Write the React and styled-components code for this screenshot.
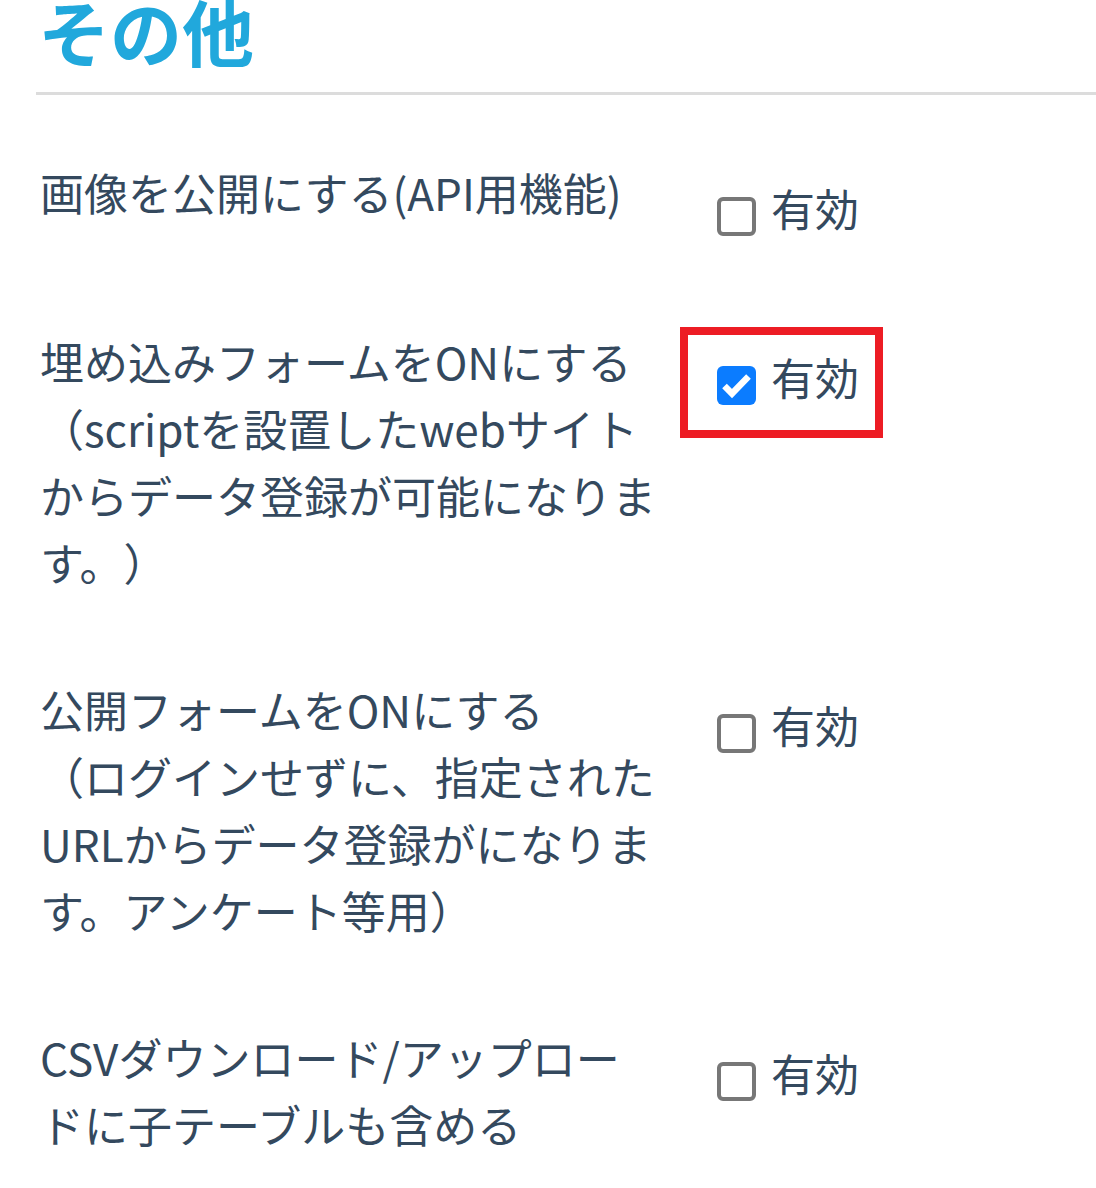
import React from "react";
import styled, { createGlobalStyle } from "styled-components";

const GlobalStyle = createGlobalStyle`
  html, body {
    margin: 0;
    padding: 0;
    background: #ffffff;
  }
  body {
    font-family: "Noto Sans CJK JP", "Noto Sans", sans-serif;
    color: #34495e;
    overflow: hidden;
  }
`;

const settings = [
  { id: "public-image", lead: "画像を公開にする(API用機能)", note: "", checked: false },
  {
    id: "embed-form",
    lead: "埋め込みフォームをONにする",
    note: "（scriptを設置したwebサイトからデータ登録が可能になります。）",
    checked: true,
    highlight: true,
  },
  {
    id: "public-form",
    lead: "公開フォームをONにする",
    note: "（ログインせずに、指定されたURLからデータ登録がになります。アンケート等用）",
    checked: false,
  },
  { id: "csv-child", lead: "CSVダウンロード/アップロードに子テーブルも含める", note: "", checked: false },
];

const CheckIcon = () => (
  <svg width="39" height="39" viewBox="0 0 39 39">
    <path d="M7.5 20 L15 27.5 L31.5 10.5" fill="none" stroke="#ffffff" strokeWidth="6.5" strokeLinejoin="miter" />
  </svg>
);

const Checkbox = ({ checked }) => (
  <S.Box $checked={checked}>{checked && <CheckIcon />}</S.Box>
);

const SettingRow = ({ item }) => (
  <S.Row>
    <S.Label>
      {item.lead}
      {item.note && (
        <>
          <br />
          {item.note}
        </>
      )}
    </S.Label>
    <S.Option>
      <Checkbox checked={item.checked} />
      <S.OptionText>有効</S.OptionText>
      {item.highlight && <S.Highlight />}
    </S.Option>
  </S.Row>
);

const App = () => (
  <>
    <GlobalStyle />
    <S.Page>
      <S.Header>
        <S.Title>その他</S.Title>
      </S.Header>
      <S.List>
        {settings.map((item) => (
          <SettingRow key={item.id} item={item} />
        ))}
      </S.List>
    </S.Page>
  </>
);

const S = {
  Page: styled.div`
    padding-left: 36px;
    height: 1188px;
    box-sizing: border-box;
  `,
  Header: styled.div`
    padding: 0 0 26px 2px;
    border-bottom: 3px solid #dcdcdc;
  `,
  Title: styled.h2`
    margin: -6px 0 0;
    font-size: 72px;
    line-height: 72px;
    font-weight: 700;
    color: #21a8dc;
  `,
  List: styled.div`
    display: flex;
    flex-direction: column;
    gap: 80px;
    padding: 64px 0 0 4px;
  `,
  Row: styled.div`
    display: flex;
    align-items: flex-start;
  `,
  Label: styled.div`
    flex: none;
    width: 618px;
    padding-right: 22px;
    font-size: 44px;
    line-height: 67px;
    line-break: strict;
    text-spacing-trim: space-all;
  `,
  Option: styled.div`
    position: relative;
    display: flex;
    align-items: flex-start;
    gap: 15px;
    padding: 16px 0 6px 37px;
  `,
  Box: styled.span`
    flex: none;
    box-sizing: border-box;
    width: 39px;
    height: 39px;
    margin-top: 22px;
    border-radius: 6px;
    border: ${({ $checked }) => ($checked ? "none" : "4px solid #777777")};
    background: ${({ $checked }) => ($checked ? "#0b7cff" : "#ffffff")};
    display: flex;
    align-items: center;
    justify-content: center;
  `,
  OptionText: styled.span`
    font-size: 44px;
    line-height: 67px;
  `,
  Highlight: styled.span`
    position: absolute;
    top: -1px;
    left: 0;
    width: 203px;
    height: 111px;
    box-sizing: border-box;
    border: 8px solid #ed1c24;
    pointer-events: none;
  `,
};

export default App;
